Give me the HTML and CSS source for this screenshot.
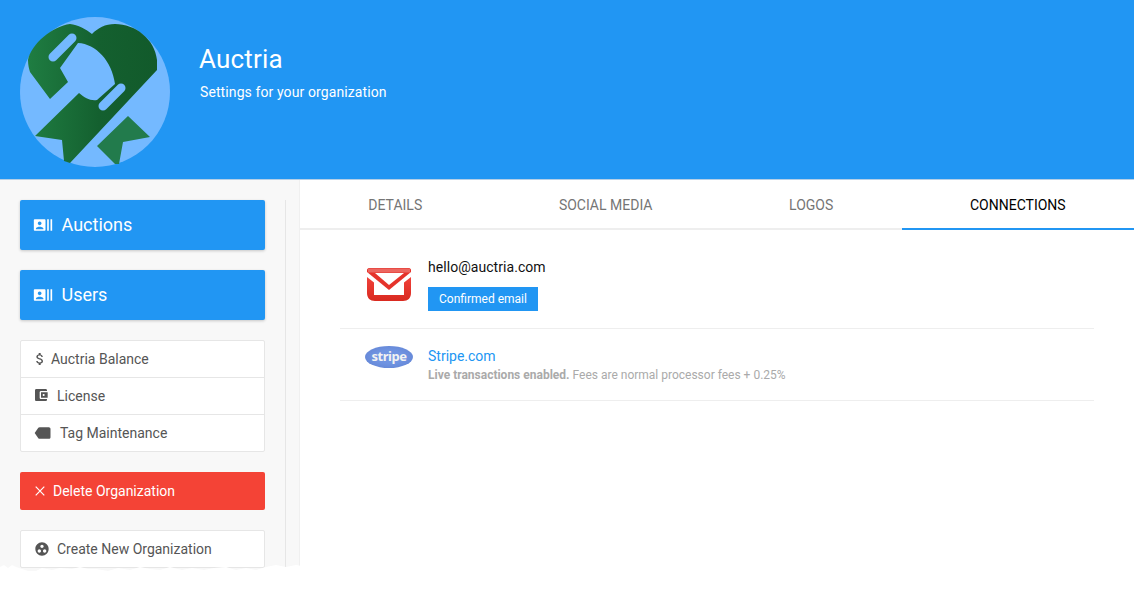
FILE: index.html
```html
<!DOCTYPE html>
<html lang="en">
<head>
    <meta charset="UTF-8">
    <title>Auctria</title>
    <link rel="stylesheet" href="styles.css">
</head>
<body>
    <header class="org-header">
        <svg class="org-logo" width="150" height="150" viewBox="0 0 150 150">
            <defs>
                <linearGradient id="heartFill" x1="0" y1="0" x2="1" y2="0">
                    <stop offset="0" stop-color="#1f7d42"/>
                    <stop offset="0.55" stop-color="#14602f"/>
                    <stop offset="1" stop-color="#125a2b"/>
                </linearGradient>
            </defs>
            <circle cx="75" cy="75" r="75" fill="#74b9ff"/>
            <path d="M72 17 C66 12 58 8 50 7 C33 9 11 27 8 43 C8 48 9 52 10 55 L30 82 L48 65 L40 51 L58 26 C76 27 92 44 95 67 L77 83 C70 84 65 81 59 76 L15 119 L42 123 L44 144 L50 146 L137 53 L137 43 C135 22 115 7 95 7 C85 7 78 11 72 17 Z" fill="url(#heartFill)"/>
            <path d="M33 40 L52 21 M83 89 L101 71" stroke="#74b9ff" stroke-width="9" stroke-linecap="round"/>
            <path d="M108 99 L130 120 L103 125 L99 147 L95 147 L77 129 Z" fill="#227b4c"/>
        </svg>
        <div class="org-title">
            <h1>Auctria</h1>
            <p>Settings for your organization</p>
        </div>
    </header>

    <div class="page-body">
        <aside class="sidebar">
            <div class="sidebar-inner">
                <a class="btn-big">
                    <svg width="20" height="20" viewBox="0 0 24 24"><path d="M21 5v14h2V5h-2zm-4 14h2V5h-2v14zM14 5H2c-.55 0-1 .45-1 1v12c0 .55.45 1 1 1h12c.55 0 1-.45 1-1V6c0-.55-.45-1-1-1zM8 7.75c1.24 0 2.25 1.01 2.25 2.25S9.24 12.25 8 12.25 5.75 11.24 5.75 10 6.76 7.75 8 7.75zM12.5 17h-9v-.75c0-1.5 3-2.25 4.5-2.25s4.5.75 4.5 2.25V17z"/></svg>
                    <span>Auctions</span>
                </a>
                <a class="btn-big">
                    <svg width="20" height="20" viewBox="0 0 24 24"><path d="M21 5v14h2V5h-2zm-4 14h2V5h-2v14zM14 5H2c-.55 0-1 .45-1 1v12c0 .55.45 1 1 1h12c.55 0 1-.45 1-1V6c0-.55-.45-1-1-1zM8 7.75c1.24 0 2.25 1.01 2.25 2.25S9.24 12.25 8 12.25 5.75 11.24 5.75 10 6.76 7.75 8 7.75zM12.5 17h-9v-.75c0-1.5 3-2.25 4.5-2.25s4.5.75 4.5 2.25V17z"/></svg>
                    <span>Users</span>
                </a>
                <ul class="side-list">
                    <li>
                        <svg class="icon-dollar" width="16" height="16" viewBox="0 0 24 24"><path d="M11.8 10.9c-2.27-.59-3-1.2-3-2.15 0-1.09 1.01-1.85 2.7-1.85 1.78 0 2.44.85 2.5 2.1h2.21c-.07-1.72-1.12-3.3-3.21-3.81V3h-3v2.16c-1.94.42-3.5 1.68-3.5 3.61 0 2.31 1.91 3.46 4.7 4.13 2.5.6 3 1.48 3 2.41 0 .69-.49 1.79-2.7 1.79-2.06 0-2.87-.92-2.98-2.1h-2.2c.12 2.19 1.76 3.42 3.68 3.83V21h3v-2.15c1.95-.37 3.5-1.5 3.5-3.55 0-2.84-2.43-3.81-4.7-4.4z"/></svg>
                        Auctria Balance
                    </li>
                    <li>
                        <svg class="icon-wallet" width="16" height="16" viewBox="0 0 24 24"><path d="M21 18v1c0 1.1-.9 2-2 2H5c-1.11 0-2-.9-2-2V5c0-1.1.89-2 2-2h14c1.1 0 2 .9 2 2v1h-9c-1.11 0-2 .9-2 2v8c0 1.1.89 2 2 2h9zm-9-2h10V8H12v8zm4-2.5c-.83 0-1.5-.67-1.5-1.5s.67-1.5 1.5-1.5 1.5.67 1.5 1.5-.67 1.5-1.5 1.5z"/></svg>
                        License
                    </li>
                    <li>
                        <svg class="icon-tag" width="20" height="20" viewBox="0 0 24 24"><path transform="matrix(-1 0 0 1 24 0)" d="M17.63 5.84C17.27 5.33 16.67 5 16 5L5 5.01C3.9 5.01 3 5.9 3 7v10c0 1.1.9 1.99 2 1.99L16 19c.67 0 1.27-.33 1.63-.84L22 12l-4.37-6.16z"/></svg>
                        Tag Maintenance
                    </li>
                </ul>
                <a class="btn-delete">
                    <svg width="10" height="10" viewBox="0 0 10 10"><path d="M.7.7l8.6 8.6M9.3.7L.7 9.3" stroke="#fff" stroke-width="1.2"/></svg>
                    Delete Organization
                </a>
                <div class="btn-create">
                    <svg width="16" height="16" viewBox="0 0 24 24"><path d="M12 2C6.48 2 2 6.48 2 12s4.48 10 10 10 10-4.48 10-10S17.52 2 12 2zM8 17.5c-1.38 0-2.5-1.12-2.5-2.5s1.12-2.5 2.5-2.5 2.5 1.12 2.5 2.5-1.12 2.5-2.5 2.5zM9.5 8c0-1.38 1.12-2.5 2.5-2.5s2.5 1.12 2.5 2.5-1.12 2.5-2.5 2.5S9.5 9.38 9.5 8zm6.5 9.5c-1.38 0-2.5-1.12-2.5-2.5s1.12-2.5 2.5-2.5 2.5 1.12 2.5 2.5-1.12 2.5-2.5 2.5z"/></svg>
                    Create New Organization
                </div>
            </div>
        </aside>

        <main class="content">
            <nav class="tabs">
                <a class="tab">DETAILS</a>
                <a class="tab">SOCIAL MEDIA</a>
                <a class="tab">LOGOS</a>
                <a class="tab active">CONNECTIONS</a>
            </nav>
            <div class="connections">
                <div class="conn-row conn-email">
                    <div class="conn-icon">
                        <svg width="44" height="33" viewBox="0 0 44 33">
                            <defs>
                                <linearGradient id="mailBody" x1="0" y1="0" x2="0" y2="1">
                                    <stop offset="0" stop-color="#f0413a"/>
                                    <stop offset="1" stop-color="#d92a20"/>
                                </linearGradient>
                            </defs>
                            <path d="M0 2 C0 1 1 0 2 0 L42 0 C43 0 44 1 44 2 L44 4 L22 22 L0 4 Z" fill="#e5332b"/>
                            <path d="M1 0.5 L43 0.5 L43 4.5 L1 4.5 Z" fill="#ec6660"/>
                            <path d="M8 5 L37 5 L22 17 Z" fill="#fff"/>
                            <path d="M0 9 L7 14.5 L7 27 L37 27 L37 14.5 L44 9 L44 25 C44 30 41 33 36 33 L8 33 C3 33 0 30 0 25 Z" fill="url(#mailBody)"/>
                        </svg>
                    </div>
                    <div class="conn-text">
                        <div class="conn-email-addr">hello@auctria.com</div>
                        <span class="conn-badge">Confirmed email</span>
                    </div>
                </div>
                <div class="conn-row conn-stripe">
                    <div class="conn-icon">
                        <div class="stripe-logo">stripe</div>
                    </div>
                    <div class="conn-text">
                        <a class="conn-link">Stripe.com</a>
                        <div class="conn-note"><b>Live transactions enabled.</b> Fees are normal processor fees + 0.25%</div>
                    </div>
                </div>
            </div>
        </main>
    </div>

    <svg class="torn-edge" width="1134" height="36" viewBox="0 0 1134 36">
        <path d="M0 5 L4 3 L8 6 L12 3 L16 5 L22 7 L28 9 L36 9 L42 6 L52 8 L60 6 L72 7 L80 5 L88 7 L96 7 L108 9 L118 6 L130 8 L140 5 L150 7 L160 8 L170 5 L182 8 L192 6 L204 8 L214 6 L226 5 L236 8 L246 6 L256 8 L266 5 L276 3 L286 5 L296 3 L302 4 L1134 4 L1134 36 L0 36 Z" fill="#fff"/>
    </svg>
</body>
</html>
```

FILE: styles.css
```css
* {
    box-sizing: border-box;
}
html, body {
    height: 598px;
    overflow: hidden;
}
body {
    margin: 0;
    font-family: 'Roboto', sans-serif;
    background: #fff;
    color: #555;
    position: relative;
}
svg {
    display: block;
    flex-shrink: 0;
}

.org-header {
    height: 180px;
    background: #2196f3;
    border-bottom: 1px solid #b5cfe6;
    padding: 17px 20px 0;
    display: flex;
    color: #fff;
}
.org-title {
    margin-left: 30px;
    padding-top: 26px;
}
.org-title h1 {
    margin: 0 0 0 -1px;
    font-size: 26px;
    font-weight: 400;
    line-height: 32px;
    letter-spacing: 0.2px;
}
.org-title p {
    margin: 8px 0 0;
    font-size: 14px;
    line-height: 18px;
    letter-spacing: 0.1px;
}

.page-body {
    display: flex;
    height: 418px;
}
.sidebar {
    width: 300px;
    padding-top: 20px;
    background: #f8f8f8;
    border-right: 1px solid #f0f0f0;
}
.sidebar-inner {
    width: 286px;
    height: 100%;
    padding: 0 20px;
    border-right: 1px solid #e6e6e6;
}

.btn-big {
    display: flex;
    align-items: center;
    gap: 8.5px;
    width: 245px;
    height: 50px;
    margin-bottom: 20px;
    padding-left: 13px;
    background: #2196f3;
    color: #fff;
    font-size: 18px;
    border-radius: 2px;
    box-shadow: 0 1px 3px rgba(0, 0, 0, 0.2);
}
.btn-big svg {
    fill: #fff;
}
.btn-big span {
    margin-top: -2px;
}

.side-list {
    list-style: none;
    margin: 0 0 20px;
    padding: 0;
    width: 245px;
    background: #fff;
    border: 1px solid #e6e6e6;
    border-radius: 2px;
}
.side-list li {
    display: flex;
    align-items: center;
    height: 37px;
    padding-left: 14px;
    font-size: 14px;
    border-bottom: 1px solid #e6e6e6;
}
.side-list li:last-child {
    height: 36px;
    border-bottom: none;
}
.side-list svg {
    fill: #555;
}
.icon-dollar {
    margin: 0 3px 0 -3px;
}
.icon-wallet {
    margin: -2px 8px 0 -2px;
}
.icon-tag {
    margin: -1px 7px 0 -2px;
}

.btn-delete {
    display: flex;
    align-items: center;
    gap: 8px;
    width: 245px;
    height: 38px;
    margin-bottom: 20px;
    padding-left: 15px;
    background: #f44336;
    color: #fff;
    font-size: 14px;
    border-radius: 2px;
}
.btn-create {
    display: flex;
    align-items: center;
    gap: 7px;
    width: 245px;
    height: 38px;
    padding-left: 13px;
    background: #fff;
    border: 1px solid #e6e6e6;
    border-radius: 2px;
    font-size: 14px;
}
.btn-create svg {
    fill: #555;
}

.content {
    flex: 1;
}
.tabs {
    display: flex;
    height: 50px;
    border-bottom: 2px solid #eee;
}
.tab {
    flex: 1 1 auto;
    height: 50px;
    line-height: 50px;
    text-align: center;
    font-size: 14px;
    color: #757575;
}
.tab.active {
    color: #000;
    border-bottom: 2px solid #2196f3;
}

.connections {
    padding: 0 40px;
}
.conn-row {
    display: flex;
    padding-left: 25px;
    border-bottom: 1px solid #eee;
}
.conn-email {
    height: 99px;
    padding-top: 28px;
}
.conn-stripe {
    height: 72px;
    padding-top: 18px;
}
.conn-icon {
    width: 63px;
    flex-shrink: 0;
}
.conn-email .conn-icon {
    padding: 10px 0 0 2px;
}
.conn-email-addr {
    font-size: 14px;
    line-height: 18px;
    letter-spacing: 0.05px;
    color: #111;
}
.conn-badge {
    display: inline-block;
    margin-top: 11px;
    width: 110px;
    height: 24px;
    line-height: 24px;
    text-align: center;
    background: #2196f3;
    color: #fff;
    font-size: 12px;
}
.stripe-logo {
    width: 48px;
    height: 22px;
    margin-top: -1px;
    border-radius: 50%;
    background: radial-gradient(ellipse at center, #7094e2 40%, #5f80d0 100%);
    color: #f2f2f2;
    font-family: 'Noto Sans', sans-serif;
    font-size: 13px;
    font-weight: 700;
    letter-spacing: -0.5px;
    line-height: 21px;
    text-align: center;
}
.conn-link {
    display: block;
    font-size: 14px;
    line-height: 18px;
    color: #2196f3;
}
.conn-note {
    margin-top: 1px;
    font-size: 12px;
    line-height: 18px;
    color: #aaa;
}

.torn-edge {
    position: absolute;
    left: 0;
    top: 562px;
}
```
